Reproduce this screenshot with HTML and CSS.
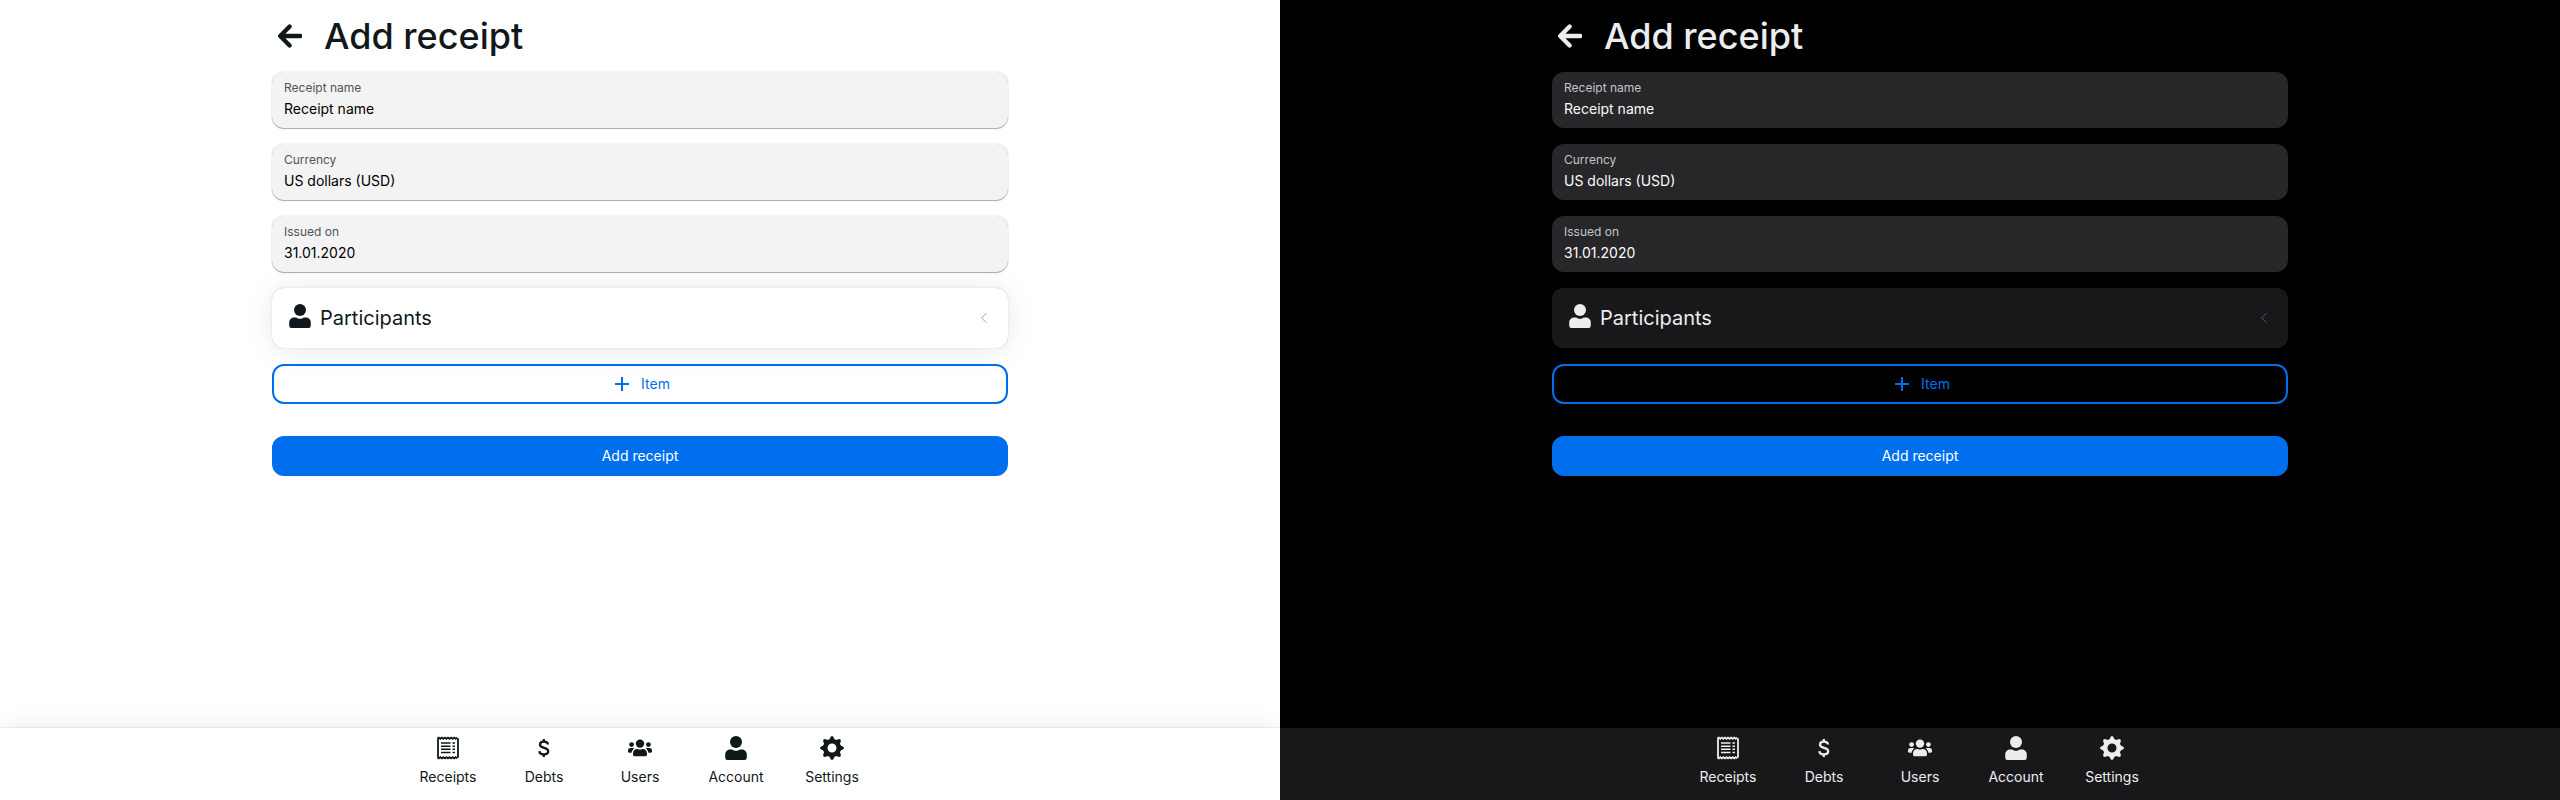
FILE: index.html
```
<!DOCTYPE html>
<html lang="en">
<head>
<meta charset="utf-8">
<title>Add receipt</title>
<link rel="stylesheet" href="styles.css">
</head>
<body>
<svg class="sprite" aria-hidden="true">
  <symbol id="back" viewBox="0 0 24 24"><path d="M22.200 12H2.800M11.600 2.500 2.200 12l9.400 9.500" fill="none" stroke="currentColor" stroke-width="4.300" stroke-linecap="round" stroke-linejoin="round"/></symbol>
  <symbol id="user" viewBox="0 0 24 24"><circle cx="12" cy="6" r="6"/><path d="M6 13.500h2.200c1.200.9 2.400 1.300 3.800 1.300s2.600-.4 3.800-1.300H18a4.800 4.800 0 0 1 4.800 4.800v3.500a2.200 2.200 0 0 1-2.200 2.200H3.400a2.200 2.200 0 0 1-2.200-2.200v-3.500A4.800 4.800 0 0 1 6 13.500z"/></symbol>
  <symbol id="receipt" viewBox="0 0 24 24"><path d="M2 2.300v19.400M22 2.300v19.400M1.500 2.500l1.300-.9 1.500 1.200 1.550-1.200 1.550 1.200 1.550-1.200 1.550 1.200 1.500-1.200 1.550 1.200 1.550-1.200 1.550 1.200 1.550-1.200 1.500 1.200 1.550-1.200M1.500 21.500l1.300.9 1.500-1.200 1.550 1.200 1.550-1.200 1.550 1.200 1.550-1.200 1.500 1.200 1.550-1.200 1.550 1.200 1.550-1.200 1.550 1.200 1.500-1.200 1.550 1.200" fill="none" stroke="currentColor" stroke-width="1.800"/><path d="M5 7h9.500M5 10.200h9.500M5 13.300h9.500M5 16.500h9.500M16.500 7h2.500M16.500 10.200h2.500M16.500 13.300h2.500M16.500 16.500h2.500" fill="none" stroke="currentColor" stroke-width="1.500"/></symbol>
  <symbol id="dollar" viewBox="0 0 24 24"><path d="M11.800 3v3M11.800 18v3M16 8.500C15.800 6.500 14.200 5.600 11.900 5.600 9.500 5.600 8 6.700 8 8.500c0 4.500 8.200 2.300 8.200 6.800 0 2-1.700 3.100-4.300 3.100-2.700 0-4.400-1-4.500-3.300" fill="none" stroke="currentColor" stroke-width="2.300"/></symbol>
  <symbol id="users" viewBox="0 0 24 24"><circle cx="12" cy="7.600" r="4.200"/><path d="M9.200 13h.5c1.500.8 3.100.8 4.600 0h.5c2.300 0 4.200 1.900 4.200 4.200v1.300c0 1-.8 1.800-1.800 1.800H6.800c-1 0-1.800-.8-1.800-1.800v-1.300C5 14.900 6.900 13 9.200 13z"/><circle cx="3.600" cy="8.600" r="2.400"/><circle cx="20.400" cy="8.600" r="2.400"/><path d="M2.400 12h2.400c.7 0 1.200.2 1.700.6-1.600.9-2.600 2.300-2.900 4.200H1.200c-.7 0-1.200-.5-1.200-1.200v-1.200C0 13.100 1.100 12 2.400 12zM21.600 12h-2.400c-.7 0-1.200.2-1.700.6 1.600.9 2.600 2.300 2.900 4.200h2.400c.7 0 1.200-.5 1.200-1.200v-1.200c0-1.300-1.100-2.400-2.400-2.400z"/></symbol>
  <symbol id="gear" viewBox="0 0 24 24"><path fill-rule="evenodd" d="M10.800.8Q12-.8 13.200.8L14.500 3.200 16.300 4 19 3.100Q21 3 20.900 5L20 7.700 20.800 9.500 23.200 10.800Q24.800 12 23.200 13.200L20.800 14.500 20 16.300 20.900 19Q21 21 19 20.900L16.300 20 14.500 20.800 13.200 23.200Q12 24.800 10.800 23.200L9.500 20.800 7.700 20 5 20.900Q3 21 3.100 19L4 16.300 3.200 14.500.8 13.200Q-.8 12 .8 10.800L3.200 9.500 4 7.700 3.100 5Q3 3 5 3.100L7.700 4 9.500 3.200zM12 7.500a4.500 4.500 0 1 0 0 9 4.500 4.500 0 0 0 0-9z"/></symbol>
  <symbol id="plus" viewBox="0 0 14 14"><path d="M7 0v14M0 7h14" fill="none" stroke="currentColor" stroke-width="2"/></symbol>
  <symbol id="chevron" viewBox="0 0 24 24"><path d="m15.500 19-7-7 7-7" fill="none" stroke="currentColor" stroke-width="1.500" stroke-linecap="round" stroke-linejoin="round"/></symbol>
</svg>
<div class="screens">
  <div class="screen light">
    <main class="content">
      <header class="header"><svg class="icon"><use href="#back"/></svg><h1 class="title">Add receipt</h1></header>
      <label class="field"><span class="label">Receipt name</span><span class="value">Receipt name</span></label>
      <label class="field"><span class="label">Currency</span><span class="value">US dollars (USD)</span></label>
      <label class="field"><span class="label">Issued on</span><span class="value">31.01.2020</span></label>
      <section class="card"><svg class="icon person"><use href="#user"/></svg><span class="card-title">Participants</span><svg class="chevron"><use href="#chevron"/></svg></section>
      <button class="button outline"><svg class="plus"><use href="#plus"/></svg>Item</button>
      <button class="button solid">Add receipt</button>
    </main>
    <nav class="nav">
      <a class="tab"><svg class="icon"><use href="#receipt"/></svg>Receipts</a>
      <a class="tab"><svg class="icon"><use href="#dollar"/></svg>Debts</a>
      <a class="tab"><svg class="icon"><use href="#users"/></svg>Users</a>
      <a class="tab"><svg class="icon"><use href="#user"/></svg>Account</a>
      <a class="tab"><svg class="icon"><use href="#gear"/></svg>Settings</a>
    </nav>
  </div>
  <div class="screen dark">
    <main class="content">
      <header class="header"><svg class="icon"><use href="#back"/></svg><h1 class="title">Add receipt</h1></header>
      <label class="field"><span class="label">Receipt name</span><span class="value">Receipt name</span></label>
      <label class="field"><span class="label">Currency</span><span class="value">US dollars (USD)</span></label>
      <label class="field"><span class="label">Issued on</span><span class="value">31.01.2020</span></label>
      <section class="card"><svg class="icon person"><use href="#user"/></svg><span class="card-title">Participants</span><svg class="chevron"><use href="#chevron"/></svg></section>
      <button class="button outline"><svg class="plus"><use href="#plus"/></svg>Item</button>
      <button class="button solid">Add receipt</button>
    </main>
    <nav class="nav">
      <a class="tab"><svg class="icon"><use href="#receipt"/></svg>Receipts</a>
      <a class="tab"><svg class="icon"><use href="#dollar"/></svg>Debts</a>
      <a class="tab"><svg class="icon"><use href="#users"/></svg>Users</a>
      <a class="tab"><svg class="icon"><use href="#user"/></svg>Account</a>
      <a class="tab"><svg class="icon"><use href="#gear"/></svg>Settings</a>
    </nav>
  </div>
</div>
</body>
</html>
```
FILE: styles.css
```
* { box-sizing: border-box; }
body { margin: 0; font-family: Inter, sans-serif; font-size: 14px; line-height: 20px; }
.sprite { display: none; }
.screens { display: grid; grid-template-columns: 1fr 1fr; height: 800px; }
.screen { display: flex; flex-direction: column; overflow: hidden; background: var(--bg); color: var(--fg); }
.light {
  --bg: #fff; --fg: #11181c; --field: #f3f3f3; --label: #52525b; --value: #000; --surface: #fff; --chevron: #a1a1aa;
  --field-shadow: 0 0 1px rgb(0 0 0 / .3), 0 1px 1px rgb(0 0 0 / .32);
  --card-shadow: 0 0 15px rgb(0 0 0 / .03), 0 2px 30px rgb(0 0 0 / .08), 0 0 1px rgb(0 0 0 / .3);
}
.dark {
  --bg: #000; --fg: #ecedee; --field: #27272a; --label: #c4c4c9; --value: #fafafa; --surface: #18181b; --chevron: #62626a;
  --field-shadow: none;
  --card-shadow: inset 0 0 1px rgb(255 255 255 / .15);
}
.content { flex: 1; display: flex; flex-direction: column; gap: 16px; width: 736px; margin: 0 auto; padding-top: 16px; }
.header { display: flex; align-items: center; gap: 22px; height: 40px; padding-left: 6px; }
.title { margin: 0; font-size: 36px; line-height: 40px; font-weight: 500; }
.icon { width: 24px; height: 24px; fill: currentColor; flex: none; }
.field { display: flex; flex-direction: column; height: 56px; padding: 6px 12px; border-radius: 12px; background: var(--field); box-shadow: var(--field-shadow); }
.label { font-size: 12px; line-height: 20px; color: var(--label); }
.value { line-height: 22px; color: var(--value); }
.card { display: flex; align-items: center; gap: 8px; height: 60px; padding: 0 16px; border-radius: 12px; background: var(--surface); box-shadow: var(--card-shadow); }
.person { margin-bottom: 4px; }
.card-title { flex: 1; font-size: 20px; line-height: 28px; }
.chevron { width: 16px; height: 16px; color: var(--chevron); }
.button { display: flex; align-items: center; justify-content: center; gap: 12px; height: 40px; padding: 0; border: 2px solid #006fee; border-radius: 12px; font: inherit; }
.outline { padding-left: 5px; background: transparent; color: #006fee; }
.solid { margin-top: 16px; background: #006fee; color: #fff; }
.plus { width: 14px; height: 14px; }
.nav { display: flex; justify-content: center; height: 72px; padding-top: 8px; background: var(--surface); box-shadow: var(--card-shadow); }
.dark .nav { box-shadow: none; }
.tab { display: flex; flex-direction: column; align-items: center; gap: 7px; width: 96px; }
```
